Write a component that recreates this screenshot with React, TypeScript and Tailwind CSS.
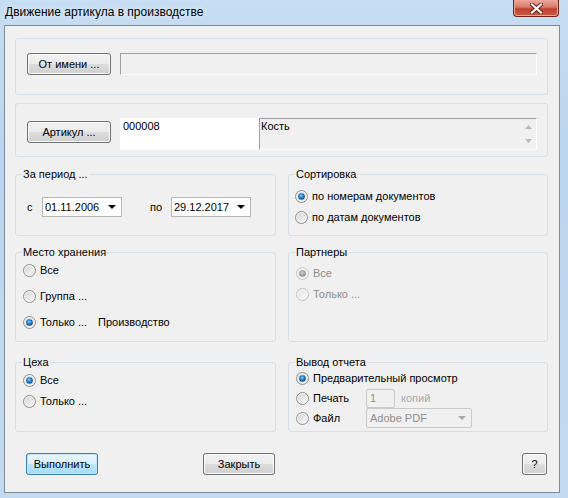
import type { ReactNode } from "react"

const font = { fontFamily: '"Liberation Sans", Arial, sans-serif' }

function Radio({ checked = false, disabled = false }: { checked?: boolean; disabled?: boolean }) {
  return (
    <svg width="13" height="13" viewBox="0 0 13 13" className="shrink-0">
      <defs>
        <linearGradient id="rb-in" x1="0" y1="0" x2="1" y2="1">
          <stop offset="0" stopColor="#d4d4d4" />
          <stop offset="1" stopColor="#fafafa" />
        </linearGradient>
        <linearGradient id="rb-in-d" x1="0" y1="0" x2="1" y2="1">
          <stop offset="0" stopColor="#e6e6e6" />
          <stop offset="1" stopColor="#f8f8f8" />
        </linearGradient>
        <radialGradient id="rb-dot" cx="0.45" cy="0.4" r="0.6">
          <stop offset="0" stopColor="#9fd6fb" />
          <stop offset="0.45" stopColor="#2a8ad4" />
          <stop offset="1" stopColor="#0c3f78" />
        </radialGradient>
        <radialGradient id="rb-dot-d" cx="0.45" cy="0.4" r="0.6">
          <stop offset="0" stopColor="#d6d6d6" />
          <stop offset="0.5" stopColor="#a8a8a8" />
          <stop offset="1" stopColor="#8a8a8a" />
        </radialGradient>
      </defs>
      <circle cx="6.5" cy="6.5" r="6" fill="#f4f4f4" stroke={disabled ? "#c2c2c2" : "#8e8f8f"} />
      <circle cx="6.5" cy="6.5" r="4.6" fill={disabled ? "url(#rb-in-d)" : "url(#rb-in)"} />
      {checked && <circle cx="6.5" cy="6.5" r="3.3" fill={disabled ? "url(#rb-dot-d)" : "url(#rb-dot)"} />}
    </svg>
  )
}

function Group({ title, className = "", children }: { title?: string; className?: string; children?: ReactNode }) {
  return (
    <div className={`relative rounded-[3px] border border-[#d5dfe5] ${className}`}>
      {title && (
        <span className="absolute -top-[7px] left-[6px] bg-[#f0f0f0] px-[1px] leading-[13px] text-black">{title}</span>
      )}
      {children}
    </div>
  )
}

function Button({ label, primary = false, className = "" }: { label: string; primary?: boolean; className?: string }) {
  return (
    <div
      className={`flex h-[22px] items-center justify-center rounded-[3px] border text-black ${
        primary
          ? "border-[#3c7fb1] bg-[linear-gradient(#eaf6fd_0%,#d9f0fc_50%,#bee6fd_50%,#a7d9f5_100%)] shadow-[inset_0_0_0_1px_#c4e5f6]"
          : "border-[#707070] bg-[linear-gradient(#f2f2f2_0%,#ebebeb_50%,#dddddd_50%,#cfcfcf_100%)] shadow-[inset_0_0_0_1px_#fbfbfb]"
      } ${className}`}
    >
      {label}
    </div>
  )
}

function DateBox({ value }: { value: string }) {
  return (
    <div className="flex h-[20px] w-[80px] items-center justify-between border border-[#b7b7b7] bg-white pl-[2px] pr-[5px]">
      <span>{value}</span>
      <svg width="8" height="4" viewBox="0 0 8 4">
        <path d="M0 0h8L4 4z" fill="#000" />
      </svg>
    </div>
  )
}

function Row({ children, h = "h-[21px]" }: { children: ReactNode; h?: string }) {
  return <div className={`flex ${h} items-center gap-[4px]`}>{children}</div>
}

export default function App() {
  return (
    <div
      className="flex h-[498px] w-[568px] flex-col overflow-hidden bg-[linear-gradient(180deg,#c6ddf3_0%,#bcd5ee_30%,#c3daf1_100%)] text-[11px] leading-[13px]"
      style={font}
    >
      {/* title bar */}
      <div className="flex h-[25px] shrink-0 items-start justify-between">
        <div className="pl-[5px] pt-[5px] text-[12px] leading-[15px] text-black [text-shadow:0_0_6px_#ffffff]">
          Движение артикула в производстве
        </div>
        <div className="mr-[9px] flex h-[17px] w-[46px] items-center justify-center rounded-b-[4px] border border-t-0 border-[#6e2418] bg-[linear-gradient(#e9a99a_0%,#d8786a_45%,#c0432e_55%,#c85a44_100%)] shadow-[inset_0_0_0_1px_#eda597]">
          <svg width="13" height="11" viewBox="0 0 13 11">
            <path d="M2 1.5L11 9.5M11 1.5L2 9.5" stroke="#5b1e14" strokeWidth="4" strokeLinecap="square" />
            <path d="M2 1.5L11 9.5M11 1.5L2 9.5" stroke="#ffffff" strokeWidth="2.2" strokeLinecap="square" />
          </svg>
        </div>
      </div>

      {/* client area */}
      <div className="ml-[4px] h-[468px] w-[556px] border border-[#7d8a99] bg-[#f0f0f0] pl-[10px] pr-[11px] pt-[12px]">
        <Group className="flex h-[57px] items-start gap-[9px] pl-[11px] pr-[10px] pt-[14px]">
          <Button label="От имени ..." className="w-[84px]" />
          <div className="h-[22px] flex-1 border border-b-white border-l-[#a0a0a0] border-r-white border-t-[#a0a0a0] bg-[#f0f0f0]" />
        </Group>

        <Group className="mt-[8px] flex h-[54px] items-start pl-[11px] pr-[10px] pt-[14px]">
          <Button label="Артикул ..." className="mt-[3px] w-[84px]" />
          <div className="ml-[9px] h-[32px] w-[139px] bg-white pl-[3px] pt-[2px] text-black">000008</div>
          <div className="flex h-[32px] flex-1 border border-b-white border-l-[#a0a0a0] border-r-white border-t-[#a0a0a0] bg-[#f0f0f0]">
            <div className="flex-1 pl-[1px] pt-[1px] text-black">Кость</div>
            <div className="flex w-[16px] flex-col items-center justify-between py-[6px]">
              <svg width="7" height="4" viewBox="0 0 7 4">
                <path d="M0 4h7L3.5 0z" fill="#b9b9b9" />
              </svg>
              <svg width="7" height="4" viewBox="0 0 7 4">
                <path d="M0 0h7L3.5 4z" fill="#b9b9b9" />
              </svg>
            </div>
          </div>
        </Group>

        <div className="mt-[17px] grid grid-cols-[261px_260px] gap-x-[12px]">
          <Group title="За период ..." className="h-[62px] pl-[11px] pt-[22px]">
            <div className="flex items-center">
              <span className="w-[15px]">с</span>
              <DateBox value="01.11.2006" />
              <span className="ml-[28px] w-[21px]">по</span>
              <DateBox value="29.12.2017" />
            </div>
          </Group>
          <Group title="Сортировка" className="h-[62px] pl-[6px] pt-[11px]">
            <Row>
              <Radio checked />
              <span>по номерам документов</span>
            </Row>
            <Row>
              <Radio />
              <span>по датам документов</span>
            </Row>
          </Group>
        </div>

        <div className="mt-[16px] grid grid-cols-[261px_260px] gap-x-[12px]">
          <Group title="Место хранения" className="h-[90px] pl-[7px] pt-[4px]">
            <Row h="h-[26px]">
              <Radio />
              <span>Все</span>
            </Row>
            <Row h="h-[26px]">
              <Radio />
              <span>Группа ...</span>
            </Row>
            <Row h="h-[26px]">
              <Radio checked />
              <span className="w-[54px]">Только ...</span>
              <span>Производство</span>
            </Row>
          </Group>
          <Group title="Партнеры" className="h-[90px] pl-[7px] pt-[10px] text-[#8d8d8d]">
            <Row>
              <Radio checked disabled />
              <span>Все</span>
            </Row>
            <Row>
              <Radio disabled />
              <span>Только ...</span>
            </Row>
          </Group>
        </div>

        <div className="mt-[20px] grid grid-cols-[261px_260px] gap-x-[12px]">
          <Group title="Цеха" className="h-[70px] pl-[7px] pt-[7px]">
            <Row>
              <Radio checked />
              <span>Все</span>
            </Row>
            <Row>
              <Radio />
              <span>Только ...</span>
            </Row>
          </Group>
          <Group title="Вывод отчета" className="h-[70px] pl-[7px] pt-[5px]">
            <Row h="h-[20px]">
              <Radio checked />
              <span>Предварительный просмотр</span>
            </Row>
            <Row h="h-[20px]">
              <Radio />
              <span className="w-[49px]">Печать</span>
              <div className="flex h-[19px] w-[29px] items-center rounded-[2px] border border-[#c9c9c9] pl-[3px] text-[#8d8d8d]">
                1
              </div>
              <span className="ml-[2px] text-[#a8a8a8]">копий</span>
            </Row>
            <Row h="h-[20px]">
              <Radio />
              <span className="w-[49px]">Файл</span>
              <div className="flex h-[20px] w-[106px] items-center justify-between rounded-[2px] border border-[#c9c9c9] pl-[3px] pr-[5px] text-[#8d8d8d]">
                <span>Adobe PDF</span>
                <svg width="8" height="4" viewBox="0 0 8 4">
                  <path d="M0 0h8L4 4z" fill="#a8a8a8" />
                </svg>
              </div>
            </Row>
          </Group>
        </div>

        <div className="mt-[21px] flex items-center">
          <Button label="Выполнить" primary className="ml-[11px] w-[72px]" />
          <Button label="Закрыть" className="ml-[105px] w-[72px]" />
          <Button label="?" className="ml-auto mr-[1px] w-[25px]" />
        </div>
      </div>
    </div>
  )
}
